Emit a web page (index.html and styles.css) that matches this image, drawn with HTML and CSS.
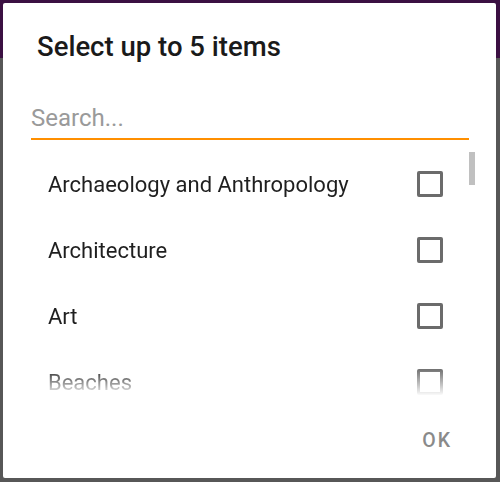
FILE: index.html
```html
<!DOCTYPE html>
<html>
<head>
<meta charset="utf-8">
<link rel="stylesheet" href="styles.css">
</head>
<body>
<div class="app">
  <div class="appbar"></div>
  <div class="content"></div>
</div>
<div class="dialog">
  <h1 class="title">Select up to 5 items</h1>
  <div class="search">
    <input class="search-input" type="text" placeholder="Search...">
  </div>
  <div class="list-wrap">
    <ul class="list">
      <li class="row"><span class="label">Archaeology and Anthropology</span><span class="box"></span></li>
      <li class="row"><span class="label">Architecture</span><span class="box"></span></li>
      <li class="row"><span class="label">Art</span><span class="box"></span></li>
      <li class="row"><span class="label">Beaches</span><span class="box"></span></li>
    </ul>
    <div class="scrollbar"></div>
  </div>
  <div class="actions">
    <button class="btn">OK</button>
  </div>
</div>
</body>
</html>
```
FILE: styles.css
```css
html, body {
  margin: 0;
  padding: 0;
  width: 500px;
  height: 482px;
  overflow: hidden;
  font-family: Roboto, "Liberation Sans", sans-serif;
}
.app {
  display: flex;
  flex-direction: column;
  height: 482px;
}
.appbar {
  height: 58px;
  background: #3b1042;
}
.content {
  flex: 1;
  background: #575757;
}
.dialog {
  position: absolute;
  left: 3px;
  top: 3px;
  width: 493px;
  height: 475px;
  background: #fff;
  border-radius: 2px;
  display: flex;
  flex-direction: column;
}
.title {
  margin: 28px 0 0 34px;
  font-size: 27.5px;
  line-height: 32px;
  font-weight: 500;
  color: #1a1a1a;
}
.search {
  margin: 40px 27px 0 28px;
}
.search-input {
  display: block;
  width: 100%;
  box-sizing: border-box;
  border: none;
  border-bottom: 2px solid #ff8f00;
  outline: none;
  padding: 0 0 5px 0;
  margin: 0;
  font-family: Roboto, "Liberation Sans", sans-serif;
  font-size: 24px;
  line-height: 30px;
  color: #222;
  background: transparent;
}
.search-input::placeholder {
  color: #9a9a9a;
}
.list-wrap {
  position: relative;
  margin-top: 11px;
  height: 245px;
}
.list {
  list-style: none;
  margin: 0;
  padding: 0;
  height: 245px;
  overflow: hidden;
  -webkit-mask-image: linear-gradient(to bottom, #000 calc(100% - 28px), transparent);
  mask-image: linear-gradient(to bottom, #000 calc(100% - 28px), transparent);
}
.row {
  height: 66px;
  display: flex;
  align-items: center;
  justify-content: space-between;
  padding: 0 53px 0 45px;
}
.label {
  font-size: 22px;
  color: #1f1f1f;
}
.box {
  width: 20px;
  height: 20px;
  border: 3px solid #6b6b6b;
  border-radius: 2px;
}
.scrollbar {
  position: absolute;
  left: 466px;
  top: 1px;
  width: 6px;
  height: 33px;
  background: #c0c0c0;
}
.actions {
  display: flex;
  justify-content: flex-end;
  padding: 35px 44px 0 0;
}
.btn {
  border: none;
  background: transparent;
  padding: 0;
  font-family: Roboto, "Liberation Sans", sans-serif;
  font-weight: 500;
  font-size: 19.5px;
  line-height: 20px;
  letter-spacing: 2px;
  color: #8a8a8a;
}
```
